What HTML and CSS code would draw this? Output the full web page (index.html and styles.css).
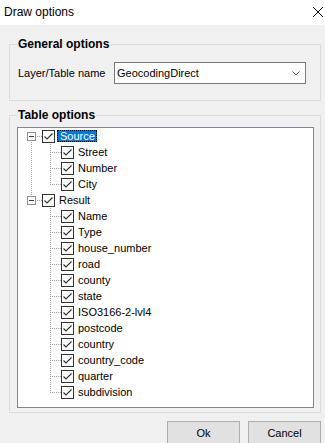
FILE: index.html
```html
<!DOCTYPE html>
<html>
<head>
  <title>Draw options</title>
  <link rel="stylesheet" href="styles.css">
</head>
<body>
  <div class="titlebar">
    <span class="title">Draw options</span>
    <svg class="close" width="10" height="10" viewBox="0 0 10 10"><path d="M0 0L10 10M10 0L0 10" stroke="#000" stroke-width="1" fill="none"/></svg>
  </div>

  <div class="dialog">
    <fieldset class="group general">
      <legend>General options</legend>
      <div class="field-row">
        <span class="field-label">Layer/Table name</span>
        <div class="combo">
          <span class="combo-text">GeocodingDirect</span>
          <svg class="chevron" width="8" height="5" viewBox="0 0 8 5"><path d="M0.5 0.5L4 4L7.5 0.5" stroke="#606060" stroke-width="1" fill="none"/></svg>
        </div>
      </div>
    </fieldset>

    <fieldset class="group table">
      <legend>Table options</legend>
      <div class="tree">
        <div class="node">
          <span class="guide line-down"><span class="expander"></span></span>
          <span class="check"><svg width="11" height="11" viewBox="0 0 11 11"><path d="M1.5 5.5L4 8L9.5 2.5" stroke="#333" stroke-width="1.1" fill="none"/></svg></span>
          <span class="label selected">Source</span>
        </div>
        <div class="node">
          <span class="guide line-through"></span>
          <span class="branch"></span>
          <span class="check"><svg width="11" height="11" viewBox="0 0 11 11"><path d="M1.5 5.5L4 8L9.5 2.5" stroke="#333" stroke-width="1.1" fill="none"/></svg></span>
          <span class="label">Street</span>
        </div>
        <div class="node">
          <span class="guide line-through"></span>
          <span class="branch"></span>
          <span class="check"><svg width="11" height="11" viewBox="0 0 11 11"><path d="M1.5 5.5L4 8L9.5 2.5" stroke="#333" stroke-width="1.1" fill="none"/></svg></span>
          <span class="label">Number</span>
        </div>
        <div class="node">
          <span class="guide line-through"></span>
          <span class="branch last"></span>
          <span class="check"><svg width="11" height="11" viewBox="0 0 11 11"><path d="M1.5 5.5L4 8L9.5 2.5" stroke="#333" stroke-width="1.1" fill="none"/></svg></span>
          <span class="label">City</span>
        </div>
        <div class="node">
          <span class="guide line-up"><span class="expander"></span></span>
          <span class="check"><svg width="11" height="11" viewBox="0 0 11 11"><path d="M1.5 5.5L4 8L9.5 2.5" stroke="#333" stroke-width="1.1" fill="none"/></svg></span>
          <span class="label">Result</span>
        </div>
        <div class="node">
          <span class="guide"></span>
          <span class="branch"></span>
          <span class="check"><svg width="11" height="11" viewBox="0 0 11 11"><path d="M1.5 5.5L4 8L9.5 2.5" stroke="#333" stroke-width="1.1" fill="none"/></svg></span>
          <span class="label">Name</span>
        </div>
        <div class="node">
          <span class="guide"></span>
          <span class="branch"></span>
          <span class="check"><svg width="11" height="11" viewBox="0 0 11 11"><path d="M1.5 5.5L4 8L9.5 2.5" stroke="#333" stroke-width="1.1" fill="none"/></svg></span>
          <span class="label">Type</span>
        </div>
        <div class="node">
          <span class="guide"></span>
          <span class="branch"></span>
          <span class="check"><svg width="11" height="11" viewBox="0 0 11 11"><path d="M1.5 5.5L4 8L9.5 2.5" stroke="#333" stroke-width="1.1" fill="none"/></svg></span>
          <span class="label">house_number</span>
        </div>
        <div class="node">
          <span class="guide"></span>
          <span class="branch"></span>
          <span class="check"><svg width="11" height="11" viewBox="0 0 11 11"><path d="M1.5 5.5L4 8L9.5 2.5" stroke="#333" stroke-width="1.1" fill="none"/></svg></span>
          <span class="label">road</span>
        </div>
        <div class="node">
          <span class="guide"></span>
          <span class="branch"></span>
          <span class="check"><svg width="11" height="11" viewBox="0 0 11 11"><path d="M1.5 5.5L4 8L9.5 2.5" stroke="#333" stroke-width="1.1" fill="none"/></svg></span>
          <span class="label">county</span>
        </div>
        <div class="node">
          <span class="guide"></span>
          <span class="branch"></span>
          <span class="check"><svg width="11" height="11" viewBox="0 0 11 11"><path d="M1.5 5.5L4 8L9.5 2.5" stroke="#333" stroke-width="1.1" fill="none"/></svg></span>
          <span class="label">state</span>
        </div>
        <div class="node">
          <span class="guide"></span>
          <span class="branch"></span>
          <span class="check"><svg width="11" height="11" viewBox="0 0 11 11"><path d="M1.5 5.5L4 8L9.5 2.5" stroke="#333" stroke-width="1.1" fill="none"/></svg></span>
          <span class="label">ISO3166-2-lvl4</span>
        </div>
        <div class="node">
          <span class="guide"></span>
          <span class="branch"></span>
          <span class="check"><svg width="11" height="11" viewBox="0 0 11 11"><path d="M1.5 5.5L4 8L9.5 2.5" stroke="#333" stroke-width="1.1" fill="none"/></svg></span>
          <span class="label">postcode</span>
        </div>
        <div class="node">
          <span class="guide"></span>
          <span class="branch"></span>
          <span class="check"><svg width="11" height="11" viewBox="0 0 11 11"><path d="M1.5 5.5L4 8L9.5 2.5" stroke="#333" stroke-width="1.1" fill="none"/></svg></span>
          <span class="label">country</span>
        </div>
        <div class="node">
          <span class="guide"></span>
          <span class="branch"></span>
          <span class="check"><svg width="11" height="11" viewBox="0 0 11 11"><path d="M1.5 5.5L4 8L9.5 2.5" stroke="#333" stroke-width="1.1" fill="none"/></svg></span>
          <span class="label">country_code</span>
        </div>
        <div class="node">
          <span class="guide"></span>
          <span class="branch"></span>
          <span class="check"><svg width="11" height="11" viewBox="0 0 11 11"><path d="M1.5 5.5L4 8L9.5 2.5" stroke="#333" stroke-width="1.1" fill="none"/></svg></span>
          <span class="label">quarter</span>
        </div>
        <div class="node">
          <span class="guide"></span>
          <span class="branch last"></span>
          <span class="check"><svg width="11" height="11" viewBox="0 0 11 11"><path d="M1.5 5.5L4 8L9.5 2.5" stroke="#333" stroke-width="1.1" fill="none"/></svg></span>
          <span class="label">subdivision</span>
        </div>
      </div>
    </fieldset>

    <div class="buttons">
      <button class="btn">Ok</button>
      <button class="btn">Cancel</button>
    </div>
  </div>
</body>
</html>
```

FILE: styles.css
```css
:root {
  --dots-v: repeating-linear-gradient(to bottom, #a0a0a0 0 1px, transparent 1px 2px);
  --dots-h: repeating-linear-gradient(to right, #a0a0a0 0 1px, transparent 1px 2px);
}

html, body {
  margin: 0;
  height: 100%;
  overflow: hidden;
}

body {
  background-color: #f0f0f0;
  color: #000;
  font-family: 'Liberation Sans', Arial, sans-serif;
  font-size: 11px;
}

.titlebar {
  height: 25px;
  background: #fff;
  display: flex;
  align-items: center;
  justify-content: space-between;
  padding: 0 2px 0 4px;
  box-sizing: border-box;
}

.title {
  font-size: 12px;
  margin-top: -1px;
}

.close {
  display: block;
  margin-top: -2px;
}

/* Group boxes */
.group {
  margin: 0 4px 0 9px;
  border: 1px solid #dcdcdc;
  min-width: 0;
}

.group legend {
  padding: 0 1px;
  font-weight: bold;
  font-size: 12px;
  line-height: 14px;
}

.general {
  margin-top: 12px;
  padding: 0 6px 16px 7px;
}

.table {
  margin-top: 7px;
  padding: 0 6px 4px 7px;
}

.field-row {
  display: flex;
  align-items: center;
  margin-top: 11px;
}

.field-label {
  width: 97px;
  padding-left: 1px;
  box-sizing: border-box;
}

.combo {
  width: 192px;
  height: 22px;
  box-sizing: border-box;
  background: #fff;
  border: 1px solid #7a7a7a;
  display: flex;
  align-items: center;
  justify-content: space-between;
  padding: 0 5px 0 2px;
}

.chevron {
  display: block;
  margin-top: 1px;
}

/* Tree view */
.tree {
  margin-top: 5px;
  height: 281px;
  box-sizing: border-box;
  background: #fff;
  border: 1px solid #828790;
}

.node {
  display: flex;
  align-items: flex-start;
  height: 16px;
}

.guide {
  width: 24px;
  height: 16px;
  flex: none;
  box-sizing: border-box;
  padding: 4px 0 0 9px;
  background-repeat: no-repeat;
}

.line-down {
  background-image: var(--dots-v), var(--dots-h);
  background-size: 1px 8px, 11px 1px;
  background-position: 13px 8px, 13px 8px;
}

.line-up {
  background-image: var(--dots-v), var(--dots-h);
  background-size: 1px 9px, 11px 1px;
  background-position: 13px 0, 13px 8px;
}

.line-through {
  background-image: var(--dots-v);
  background-size: 1px 16px;
  background-position: 13px 0;
}

.expander {
  display: block;
  width: 9px;
  height: 9px;
  box-sizing: border-box;
  border: 1px solid #919191;
  background: linear-gradient(#1e3f75, #1e3f75) center / 5px 1px no-repeat, #fff;
}

.branch {
  width: 19px;
  height: 16px;
  flex: none;
  background-image: var(--dots-v), var(--dots-h);
  background-repeat: no-repeat;
  background-size: 1px 16px, 11px 1px;
  background-position: 8px 0, 8px 8px;
}

.branch.last {
  background-size: 1px 9px, 11px 1px;
}

.check {
  width: 13px;
  height: 13px;
  flex: none;
  box-sizing: border-box;
  margin-top: 2px;
  border: 1px solid #333;
  background: #fff;
}

.check svg {
  display: block;
}

.label {
  margin: 2px 0 0 2px;
  padding: 0 2px;
  line-height: 12px;
  white-space: nowrap;
}

.label.selected {
  background: #0078d7;
  color: #fff;
  outline: 1px dotted #000;
  outline-offset: -1px;
  padding: 0 2px 0 3px;
}

/* Buttons */
.buttons {
  display: flex;
  justify-content: flex-end;
  gap: 8px;
  margin: 8px 4px 0 0;
}

.btn {
  width: 73px;
  height: 23px;
  background: #e1e1e1;
  border: 1px solid #adadad;
  font-family: 'Liberation Sans', Arial, sans-serif;
  font-size: 11px;
  color: #000;
  padding: 0;
}
```
